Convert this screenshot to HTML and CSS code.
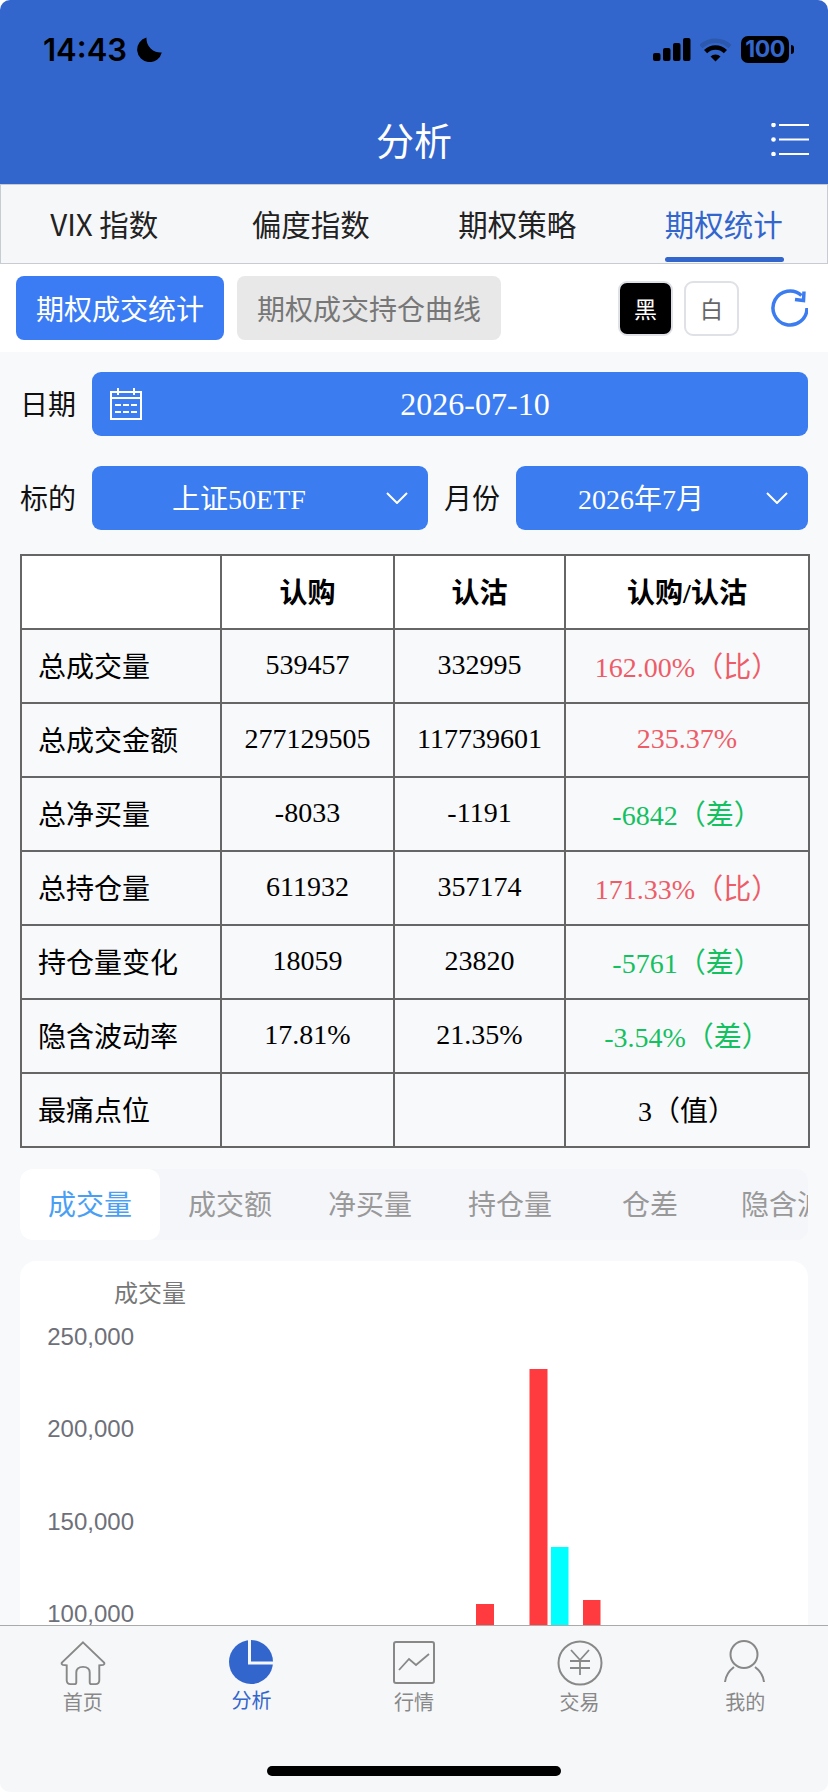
FILE: index.html
```html
<!DOCTYPE html>
<html lang="zh">

<head>
    <meta charset="UTF-8">
    <meta name="viewport" content="width=device-width, initial-scale=1.0">
    <title>分析</title>
    <link rel="stylesheet" href="styles.css">
</head>

<body>
    <div class="phone">
        <header class="top">
            <div class="status">
                <div class="clock">
                    <span>14:43</span>
                    <svg class="moon" viewBox="0 0 25 25"><path d="M9.500 0.500A12.500 12.500 0 1 0 24.800 15.500A14 14 0 0 1 9.500 0.500Z" /></svg>
                </div>
                <div class="status-icons">
                    <svg class="signal" viewBox="0 0 38 23">
                        <rect x="0" y="15" width="7.500" height="8" rx="2" />
                        <rect x="10" y="10" width="7.500" height="13" rx="2" />
                        <rect x="20" y="5" width="7.500" height="18" rx="2" />
                        <rect x="30" y="0" width="7.500" height="23" rx="2" />
                    </svg>
                    <svg class="wifi" viewBox="0 0 32 25">
                        <path class="wifi-dim" d="M1 9.500A21 21 0 0 1 30 9.500" />
                        <path class="wifi-on" d="M5.600 14.600A14 14 0 0 1 25.400 14.600" />
                        <path d="M15.500 24.500L10.500 19.500A7 7 0 0 1 20.500 19.500Z" />
                    </svg>
                    <div class="battery">100</div>
                </div>
            </div>
            <div class="nav">
                <h1>分析</h1>
                <svg class="menu" viewBox="0 0 38 33">
                    <circle cx="2.500" cy="2" r="2.300" />
                    <circle cx="2.500" cy="16.500" r="2.300" />
                    <circle cx="2.500" cy="31" r="2.300" />
                    <path d="M8 2H38M8 16.500H38M8 31H38" />
                </svg>
            </div>
        </header>

        <nav class="tabs">
            <div class="tab">VIX 指数</div>
            <div class="tab">偏度指数</div>
            <div class="tab">期权策略</div>
            <div class="tab active">期权统计</div>
        </nav>

        <section class="tools">
            <button class="tool-btn on">期权成交统计</button>
            <button class="tool-btn">期权成交持仓曲线</button>
            <div class="theme">
                <button class="swatch black">黑</button>
                <button class="swatch">白</button>
                <svg class="refresh" viewBox="0 0 40 40">
                    <path d="M37.500 20A17 17 0 1 1 32 7.500" transform="translate(1.500 0)" />
                    <path d="M36 3.500L35.500 12.500L27 11.500" />
                </svg>
            </div>
        </section>

        <main class="content">
            <div class="field-row">
                <label class="field-label">日期</label>
                <div class="picker date">
                    <svg class="calendar" viewBox="0 0 32 32">
                        <rect x="1" y="4" width="30" height="27" />
                        <path d="M1 10H31M8 0V7M24 0V7" />
                        <path d="M5 17H11M13 17H19M21 17H27M5 24H11M13 24H19M21 24H27" />
                    </svg>
                    <span class="picker-text date-text">2026-07-10</span>
                </div>
            </div>
            <div class="field-row second">
                <label class="field-label">标的</label>
                <div class="picker grow">
                    <span class="picker-text">上证50ETF</span>
                    <svg class="chevron" viewBox="0 0 22 12"><path d="M1 1L11 11L21 1" /></svg>
                </div>
                <label class="field-label mid">月份</label>
                <div class="picker month">
                    <span class="picker-text">2026年7月</span>
                    <svg class="chevron" viewBox="0 0 22 12"><path d="M1 1L11 11L21 1" /></svg>
                </div>
            </div>

            <table class="stats">
                <colgroup>
                    <col class="col-a">
                    <col class="col-b">
                    <col class="col-c">
                    <col class="col-d">
                </colgroup>
                <thead>
                    <tr>
                        <th></th>
                        <th>认购</th>
                        <th>认沽</th>
                        <th>认购/认沽</th>
                    </tr>
                </thead>
                <tbody>
                    <tr>
                        <td>总成交量</td>
                        <td>539457</td>
                        <td>332995</td>
                        <td class="up">162.00%（比）</td>
                    </tr>
                    <tr>
                        <td>总成交金额</td>
                        <td>277129505</td>
                        <td>117739601</td>
                        <td class="up">235.37%</td>
                    </tr>
                    <tr>
                        <td>总净买量</td>
                        <td>-8033</td>
                        <td>-1191</td>
                        <td class="down">-6842（差）</td>
                    </tr>
                    <tr>
                        <td>总持仓量</td>
                        <td>611932</td>
                        <td>357174</td>
                        <td class="up">171.33%（比）</td>
                    </tr>
                    <tr>
                        <td>持仓量变化</td>
                        <td>18059</td>
                        <td>23820</td>
                        <td class="down">-5761（差）</td>
                    </tr>
                    <tr>
                        <td>隐含波动率</td>
                        <td>17.81%</td>
                        <td>21.35%</td>
                        <td class="down">-3.54%（差）</td>
                    </tr>
                    <tr>
                        <td>最痛点位</td>
                        <td></td>
                        <td></td>
                        <td>3（值）</td>
                    </tr>
                </tbody>
            </table>

            <div class="subtabs">
                <div class="subtab active">成交量</div>
                <div class="subtab">成交额</div>
                <div class="subtab">净买量</div>
                <div class="subtab">持仓量</div>
                <div class="subtab">仓差</div>
                <div class="subtab last">隐含波动率</div>
            </div>

            <div class="chart-card">
                <svg class="chart" viewBox="0 0 788 400">
                    <text class="chart-title" x="130" y="41" text-anchor="middle">成交量</text>
                    <text class="axis" x="114" y="83.500" text-anchor="end">250,000</text>
                    <text class="axis" x="114" y="176" text-anchor="end">200,000</text>
                    <text class="axis" x="114" y="268.500" text-anchor="end">150,000</text>
                    <text class="axis" x="114" y="361" text-anchor="end">100,000</text>
                    <rect class="bar-red" x="456" y="343" width="18" height="57" />
                    <rect class="bar-red" x="509.500" y="108" width="18" height="292" />
                    <rect class="bar-cyan" x="531" y="286" width="17.500" height="114" />
                    <rect class="bar-red" x="563" y="339" width="17.500" height="61" />
                </svg>
            </div>
        </main>

        <footer class="tabbar">
            <div class="bar-item">
                <svg class="bar-icon" viewBox="0 0 48 46">
                    <path d="M24 1.500L46 22.500Q47 24 45 25L41 25.500V41Q41 45 37 45H33Q31 45 31 43V33Q31 27 24 27Q17 27 17 33V43Q17 45 15 45H11Q7 45 7 41V25.500L3 25Q1 24 2 22.500Z" />
                </svg>
                <span>首页</span>
            </div>
            <div class="bar-item active">
                <svg class="bar-icon pie-icon" viewBox="0 0 44 44">
                    <circle class="pie" cx="22" cy="22" r="22" />
                    <path class="pie-cut" d="M20.500 0V23H44" />
                </svg>
                <span>分析</span>
            </div>
            <div class="bar-item">
                <svg class="bar-icon" viewBox="-1 0 46 46">
                    <rect x="2" y="2" width="40" height="41" rx="2" />
                    <path class="thin" d="M7 30L17 19L24 25L37 14" />
                </svg>
                <span>行情</span>
            </div>
            <div class="bar-item">
                <svg class="bar-icon" viewBox="0 0 46 46">
                    <circle cx="23" cy="23" r="21.500" />
                    <path class="thin" d="M14 10L23 20L32 10M13 21H33M13 28H33M23 20V35" />
                </svg>
                <span>交易</span>
            </div>
            <div class="bar-item">
                <svg class="bar-icon" viewBox="0 0 46 46">
                    <circle cx="22" cy="14.500" r="13.500" />
                    <path d="M3 42Q4 33 12 27M42 42Q41 33 33 27" />
                </svg>
                <span>我的</span>
            </div>
            <div class="home-bar"></div>
        </footer>
    </div>
</body>

</html>
```

FILE: styles.css
```css
* {
    box-sizing: border-box;
}

html,
body {
    margin: 0;
    padding: 0;
    background: #fff;
}

body {
    font-family: "Noto Sans CJK SC", sans-serif;
}

.phone {
    position: relative;
    width: 828px;
    height: 1792px;
    overflow: hidden;
    border-radius: 10px;
    background: #f8f9fb;
}

/* blue header */
.top {
    height: 184px;
    background: #3366cc;
}

.status {
    height: 98px;
    padding: 35px 39px 0 43px;
    display: flex;
    justify-content: space-between;
    align-items: flex-start;
}

.clock {
    display: flex;
    align-items: center;
    gap: 10px;
    height: 28px;
    font-family: Inter, sans-serif;
    font-size: 31px;
    font-weight: 600;
    color: #000;
}

.moon {
    width: 25px;
    height: 25px;
    fill: #000;
}

.status-icons {
    display: flex;
    align-items: center;
    gap: 9px;
    height: 27px;
    margin-top: 1px;
}

.signal {
    width: 38px;
    height: 23px;
    fill: #000;
}

.wifi {
    width: 32px;
    height: 25px;
    fill: #000;
}

.wifi path {
    fill: #000;
}

.wifi .wifi-dim,
.wifi .wifi-on {
    fill: none;
    stroke-width: 4.500;
}

.wifi .wifi-dim {
    stroke: #2c58ad;
}

.wifi .wifi-on {
    stroke: #000;
}

.battery {
    position: relative;
    width: 48px;
    height: 27px;
    border-radius: 7px;
    background: #000;
    color: #3366cc;
    font-family: Inter, sans-serif;
    font-size: 23px;
    font-weight: 700;
    line-height: 27px;
    text-align: center;
    letter-spacing: -0.5px;
}

.battery::after {
    content: "";
    position: absolute;
    left: 50px;
    top: 9px;
    width: 3px;
    height: 9px;
    border-radius: 0 3px 3px 0;
    background: #000;
}

.nav {
    display: flex;
    justify-content: center;
    align-items: center;
    position: relative;
    height: 80px;
}

.nav h1 {
    margin: 0;
    font-size: 38px;
    font-weight: 400;
    color: #fff;
}

.menu {
    position: absolute;
    right: 19px;
    top: 25px;
    width: 38px;
    height: 33px;
    fill: #fff;
    stroke: none;
}

.menu path {
    fill: none;
    stroke: #fff;
    stroke-width: 2;
}

/* main tabs */
.tabs {
    display: flex;
    height: 80px;
    background: #f6f7f9;
    border: 1px solid #c8ccd2;
}

.tab {
    flex: 1;
    position: relative;
    text-align: center;
    font-size: 29.500px;
    line-height: 76px;
    color: #222;
}

.tab.active {
    color: #3366cc;
}

.tab.active::after {
    content: "";
    position: absolute;
    left: 50%;
    bottom: 1px;
    width: 119px;
    height: 5px;
    margin-left: -59px;
    border-radius: 3px;
    background: #3366cc;
}

/* buttons under tabs */
.tools {
    display: flex;
    align-items: center;
    gap: 13px;
    height: 88px;
    padding: 0 20px 0 16px;
    background: #fff;
}

button {
    font-family: inherit;
    border: none;
    padding: 0;
}

.tool-btn {
    height: 64px;
    padding: 0 20px;
    border-radius: 8px;
    font-size: 28px;
    background: #e8e8e8;
    color: #777;
}

.tool-btn.on {
    background: #3b7cf5;
    color: #fff;
}

.theme {
    display: flex;
    align-items: center;
    gap: 11px;
    margin-left: auto;
}

.swatch {
    width: 55px;
    height: 55px;
    border: 2px solid #dfe1e6;
    border-radius: 9px;
    background: #fff;
    color: #666;
    font-size: 23px;
}

.swatch.black {
    background: #000;
    color: #fff;
}

.refresh {
    width: 40px;
    height: 40px;
    margin-left: 18px;
    fill: none;
    stroke: #3b7cf0;
    stroke-width: 3.500;
}

/* filters */
.content {
    padding: 20px 20px 0;
}

.field-row {
    display: flex;
    align-items: center;
    height: 64px;
}

.field-row.second {
    margin-top: 30px;
}

.field-label {
    width: 72px;
    padding-bottom: 2px;
    font-size: 28px;
    color: #111;
}

.field-label.mid {
    width: 56px;
    margin: 0 16px;
}

.picker {
    display: flex;
    align-items: center;
    height: 64px;
    border-radius: 9px;
    background: #3b7cf0;
    color: #fff;
    font-family: "Liberation Serif", "Noto Sans CJK SC", serif;
    font-size: 28px;
    padding-right: 20px;
}

.picker.date {
    flex: 1;
    padding: 0 0 0 18px;
}

.picker.grow {
    flex: 1;
}

.picker.month {
    width: 292px;
}

.picker-text {
    flex: 1;
    padding-bottom: 2px;
    text-align: center;
}

.date-text {
    padding-bottom: 0;
    font-size: 32px;
}

.calendar {
    width: 32px;
    height: 32px;
    fill: none;
    stroke: #fff;
    stroke-width: 2;
}

.chevron {
    width: 22px;
    height: 12px;
    fill: none;
    stroke: #fff;
    stroke-width: 2;
}

/* stats table */
.stats {
    width: 788px;
    margin-top: 24px;
    table-layout: fixed;
    border-collapse: collapse;
    font-family: "Liberation Serif", "Noto Sans CJK SC", serif;
    font-size: 28px;
    color: #000;
}

.col-a {
    width: 200px;
}

.col-b {
    width: 173px;
}

.col-c {
    width: 171px;
}

.col-d {
    width: 244px;
}

.stats tr {
    height: 74px;
}

.stats th,
.stats td {
    border: 2px solid #666;
    padding: 0 0 3px;
    text-align: center;
}

.stats th {
    background: #fff;
    font-weight: 700;
}

.stats td:first-child {
    padding-left: 16px;
    text-align: left;
}

.stats .up {
    color: #ee5c68;
}

.stats .down {
    color: #14c060;
}

/* second tab row */
.subtabs {
    display: flex;
    height: 71px;
    margin-top: 21px;
    overflow: hidden;
    border-radius: 12px;
    background: #f5f6f9;
}

.subtab {
    flex: 0 0 140px;
    border-radius: 12px;
    text-align: center;
    font-size: 28px;
    line-height: 69px;
    color: #999;
    white-space: nowrap;
}

.subtab.active {
    background: #fff;
    color: #4a9ff5;
}

.subtab.last {
    padding-left: 21px;
    text-align: left;
}

/* chart */
.chart-card {
    height: 400px;
    margin-top: 21px;
    border-radius: 16px;
    background: #fff;
}

.chart {
    display: block;
    width: 788px;
    height: 400px;
}

.chart-title {
    font-size: 24px;
    fill: #777;
}

.axis {
    font-family: "Liberation Sans", sans-serif;
    font-size: 24px;
    fill: #6e7079;
}

.bar-red {
    fill: #ff3b3f;
}

.bar-cyan {
    fill: #00ffff;
}

/* bottom bar */
.tabbar {
    position: absolute;
    left: 0;
    right: 0;
    top: 1625px;
    bottom: 0;
    display: flex;
    padding-top: 14px;
    border-top: 1px solid #aaa;
    background: #f6f7f9;
}

.bar-item {
    flex: 0 0 20%;
    display: flex;
    flex-direction: column;
    align-items: center;
    font-size: 20px;
    line-height: 28px;
    color: #888;
}

.bar-item.active {
    padding-left: 6px;
    color: #3366cc;
}

.bar-icon {
    width: 46px;
    height: 46px;
    margin-bottom: 2px;
    fill: none;
    stroke: #888;
    stroke-width: 2;
}

.bar-icon .thin {
    stroke-width: 1.800;
}

.pie-icon {
    width: 44px;
    height: 44px;
}

.pie {
    fill: #3366cc;
    stroke: none;
}

.pie-cut {
    stroke: #f6f7f9;
    stroke-width: 3;
}

.home-bar {
    position: absolute;
    left: 267px;
    top: 140px;
    width: 294px;
    height: 10px;
    border-radius: 5px;
    background: #000;
}
```
